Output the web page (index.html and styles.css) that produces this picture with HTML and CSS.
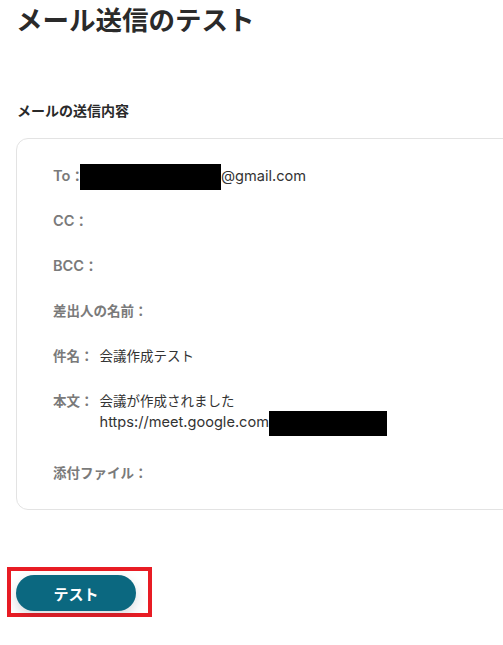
FILE: index.html
```html
<!DOCTYPE html>
<html lang="ja">
<head>
<meta charset="utf-8">
<link rel="stylesheet" href="styles.css">
</head>
<body>
<div class="page">
  <h1 class="title">メール送信のテスト</h1>
  <h2 class="section">メールの送信内容</h2>
  <div class="card">
    <div class="row"><span class="label"><span class="en">To</span>：</span><span class="value"><span class="redact redact-to"></span><span class="en">@gmail.com</span></span></div>
    <div class="row"><span class="label"><span class="en">CC</span>：</span></div>
    <div class="row"><span class="label"><span class="en">BCC</span>：</span></div>
    <div class="row"><span class="label">差出人の名前：</span></div>
    <div class="row"><span class="label">件名：</span><span class="value">会議作成テスト</span></div>
    <div class="row row-body"><span class="label">本文：</span><span class="value">会議が作成されました<br><span class="en">https://meet.google.com</span><span class="redact redact-url"></span></span></div>
    <div class="row"><span class="label">添付ファイル：</span></div>
  </div>
  <div class="highlight">
    <button class="btn" type="button">テスト</button>
  </div>
</div>
</body>
</html>
```
FILE: styles.css
```css
html, body {
  margin: 0;
  padding: 0;
  background: #ffffff;
  overflow: hidden;
}
body {
  font-family: Inter, "Noto Sans CJK JP", sans-serif;
  color: #333333;
}
.page {
  padding-left: 16px;
  width: 700px;
}
.title {
  margin: 0;
  font-size: 26.5px;
  line-height: 40px;
  font-weight: 700;
  color: #2a2a2a;
}
.section {
  margin: 61px 0 0 0;
  font-size: 14px;
  line-height: 20px;
  font-weight: 700;
  color: #2a2a2a;
  padding-left: 1px;
}
.card {
  margin-top: 17px;
  border: 1px solid #e3e3e3;
  border-radius: 12px;
  padding: 27px 36px 25px 36px;
  display: flex;
  flex-direction: column;
  gap: 24px;
  width: 560px;
}
.row {
  display: flex;
  align-items: flex-start;
  font-size: 13.5px;
  line-height: 21px;
}
.row-body {
  margin-bottom: 6px;
}
.label {
  color: #7a7a7a;
  font-weight: 700;
  margin-right: 6px;
  white-space: nowrap;
}
.value {
  color: #333333;
}
.en {
  font-size: 14.6px;
}
.label .en {
  font-weight: 600;
}
.redact {
  display: inline-block;
  background: #000000;
  vertical-align: middle;
  margin: -3px 0;
}
.redact-to {
  width: 141px;
  height: 26px;
  margin-left: -10px;
}
.redact-url {
  width: 118px;
  height: 25px;
}
.highlight {
  display: inline-block;
  margin-top: 57px;
  margin-left: -9px;
  border: 4px solid #e81c24;
  padding: 4px 12px 2px 5px;
}
.btn {
  display: block;
  width: 120px;
  height: 36px;
  border: none;
  border-radius: 18px;
  background: #0b6880;
  color: #ffffff;
  font-family: Inter, "Noto Sans CJK JP", sans-serif;
  font-size: 15px;
  font-weight: 700;
  box-shadow: 0 5px 12px rgba(40, 60, 80, 0.18);
}
```
